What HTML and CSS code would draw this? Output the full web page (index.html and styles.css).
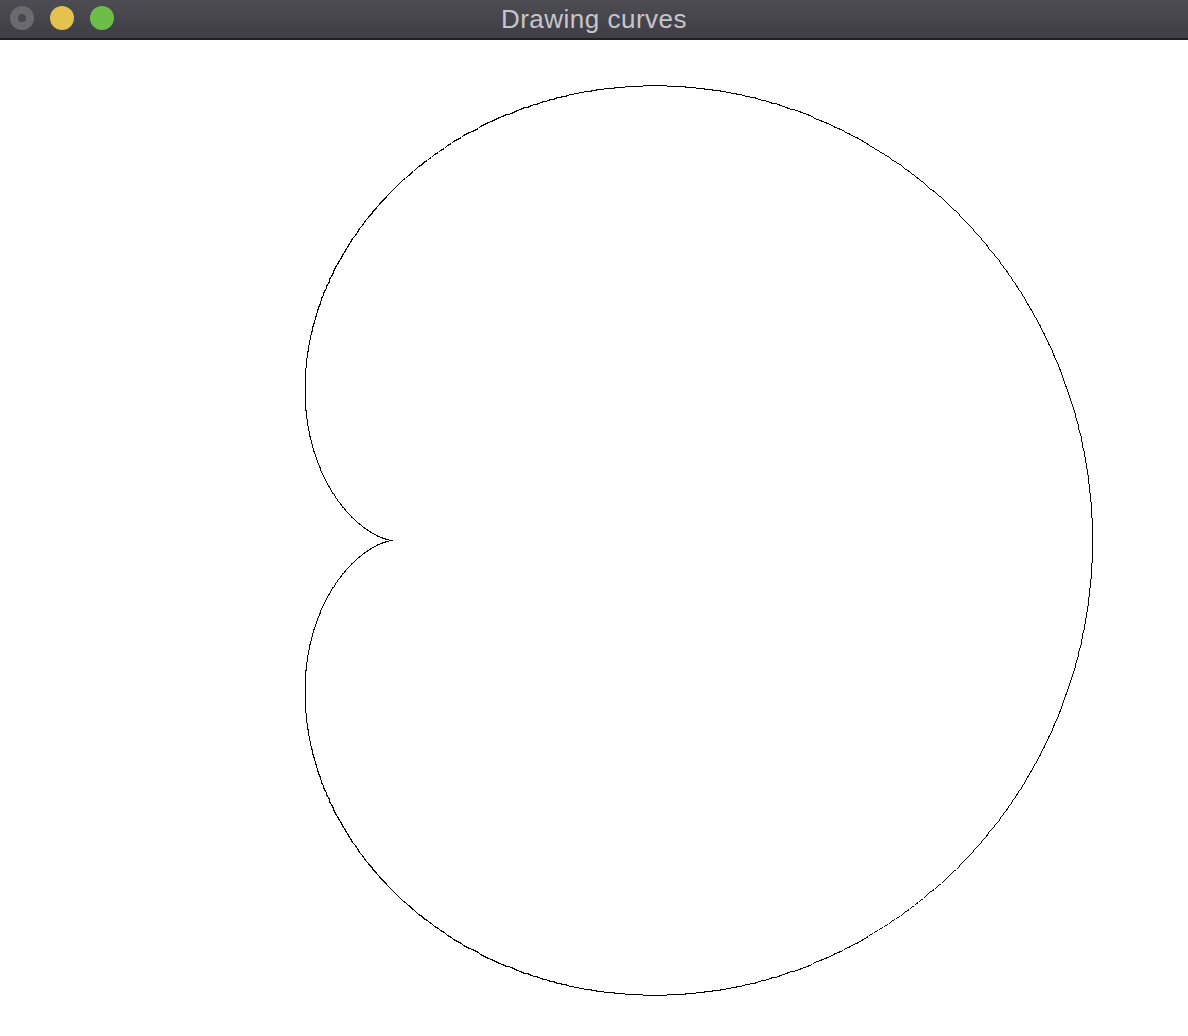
FILE: index.html
```html
<!DOCTYPE html>
<html lang="en">
<head>
<meta charset="utf-8">
<title>Drawing curves</title>
<link rel="stylesheet" href="styles.css">
</head>
<body>
<div class="window">
  <header class="titlebar">
    <div class="lights">
      <span class="light light-close"><span class="dot"></span></span>
      <span class="light light-min"></span>
      <span class="light light-zoom"></span>
    </div>
    <div class="title">Drawing curves</div>
  </header>
  <main class="canvas">
    <svg class="plot" width="1188" height="996" viewBox="0 0 1188 996" xmlns="http://www.w3.org/2000/svg">
      <polyline id="curve" class="curve" points=""/>
    </svg>
  </main>
</div>
<script src="script.js"></script>
</body>
</html>
```
FILE: styles.css
```css
html, body {
  margin: 0;
  padding: 0;
  background: #ffffff;
  overflow: hidden;
}
.window {
  width: 1188px;
  height: 1036px;
  display: flex;
  flex-direction: column;
}
.titlebar {
  height: 38px;
  flex: 0 0 38px;
  background: linear-gradient(#4d4c52, #3f3e44);
  border-bottom: 2px solid #1f1f22;
  display: flex;
  align-items: center;
  position: relative;
}
.lights {
  display: flex;
  gap: 16px;
  padding-left: 10px;
  margin-top: -2px;
}
.light {
  width: 24px;
  height: 24px;
  border-radius: 50%;
  display: flex;
  align-items: center;
  justify-content: center;
}
.light-close { background: #6a6a6f; }
.light-close .dot {
  width: 8px;
  height: 8px;
  border-radius: 50%;
  background: #48484c;
}
.light-min { background: #e4c24f; }
.light-zoom { background: #6cbe48; }
.title {
  position: absolute;
  left: 0;
  right: 0;
  top: 0;
  height: 38px;
  line-height: 38px;
  text-align: center;
  font-family: "Liberation Sans", Arial, sans-serif;
  font-size: 26px;
  letter-spacing: 0.5px;
  color: #c6c5cb;
  pointer-events: none;
}
.canvas {
  flex: 1 1 auto;
  background: #ffffff;
}
.plot {
  display: block;
}
.curve {
  fill: none;
  stroke: #000000;
  stroke-width: 1;
  shape-rendering: crispEdges;
}
```
FILE: script.js
```js
(function () {
  var cx = 392, cy = 500, a = 350;
  var pts = [];
  var n = 1440;
  for (var i = 0; i <= n; i++) {
    var t = (i / n) * Math.PI * 2;
    var r = a * (1 + Math.cos(t));
    var x = cx + r * Math.cos(t);
    var y = cy - r * Math.sin(t);
    pts.push((Math.round(x) + 0.5) + "," + (Math.round(y) + 0.5));
  }
  document.getElementById("curve").setAttribute("points", pts.join(" "));
})();
```
